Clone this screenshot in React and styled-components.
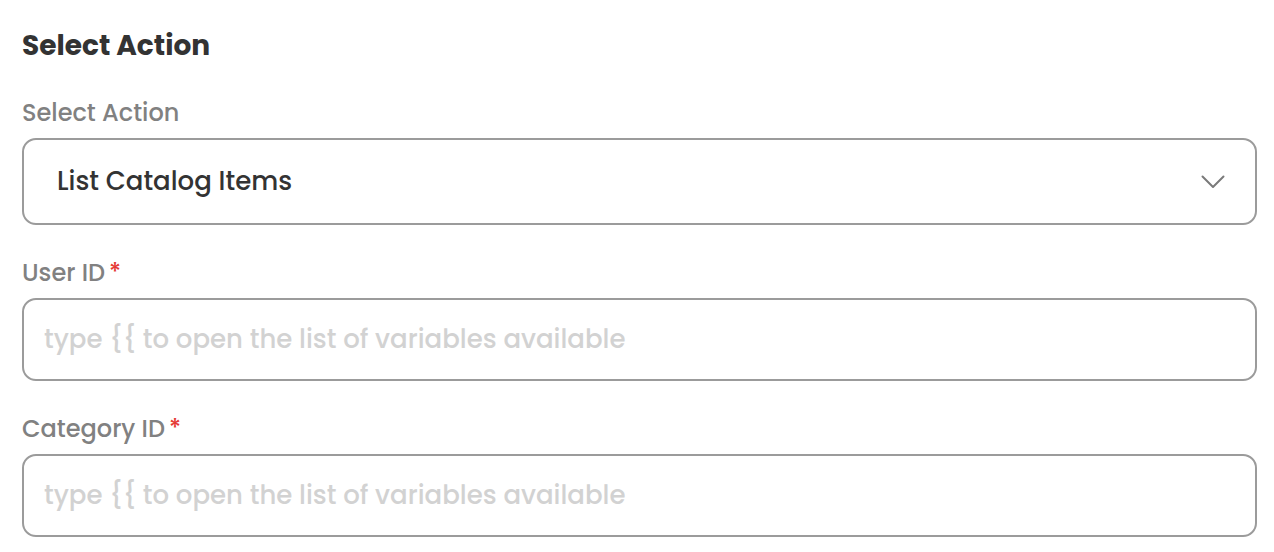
import React from "react";
import styled, { createGlobalStyle } from "styled-components";

const Global = createGlobalStyle`
  html, body { margin: 0; padding: 0; background: #fff; }
  body { font-family: Poppins, Inter, "Noto Sans", sans-serif; }
`;

const Page = styled.div`
  padding: 28px 17px 0 22px;
  display: flex;
  flex-direction: column;
  gap: 32px;
`;

const Heading = styled.h2`
  margin: 0 0 1px;
  font-size: 28px;
  line-height: 36px;
  font-weight: 700;
  color: #333;
`;

const Field = styled.div`
  display: flex;
  flex-direction: column;
`;

const Label = styled.label`
  font-size: 24px;
  line-height: 32px;
  font-weight: 500;
  color: #818181;
  margin-bottom: 9px;
`;

const Req = styled.span`
  color: #e53935;
  margin-left: 4px;
`;

const Box = styled.div`
  box-sizing: border-box;
  height: ${(p) => p.$h}px;
  border: 2px solid #9b9b9b;
  border-radius: 14px;
  display: flex;
  align-items: center;
  padding: 0 30px 0 ${(p) => p.$pl}px;
  font-size: 26px;
`;

const Value = styled.span`
  flex: 1;
  color: #333;
  font-weight: 500;
`;

const Placeholder = styled.span`
  color: #d2d2d2;
  font-weight: 500;
`;

const Chevron = () => (
  <svg width="24" height="14" viewBox="0 0 24 14" fill="none">
    <path d="M1.5 1.5 L12 12 L22.5 1.5" stroke="#7a7a7a" strokeWidth="2" strokeLinecap="round" strokeLinejoin="round" />
  </svg>
);

export default function App() {
  return (
    <>
      <Global />
      <Page>
        <Heading>Select Action</Heading>
        <Field>
          <Label>Select Action</Label>
          <Box $h={87} $pl={33}>
            <Value>List Catalog Items</Value>
            <Chevron />
          </Box>
        </Field>
        <Field>
          <Label>
            User ID<Req>*</Req>
          </Label>
          <Box $h={83} $pl={20}>
            <Placeholder>type {"{{"} to open the list of variables available</Placeholder>
          </Box>
        </Field>
        <Field>
          <Label>
            Category ID<Req>*</Req>
          </Label>
          <Box $h={83} $pl={20}>
            <Placeholder>type {"{{"} to open the list of variables available</Placeholder>
          </Box>
        </Field>
      </Page>
    </>
  );
}
